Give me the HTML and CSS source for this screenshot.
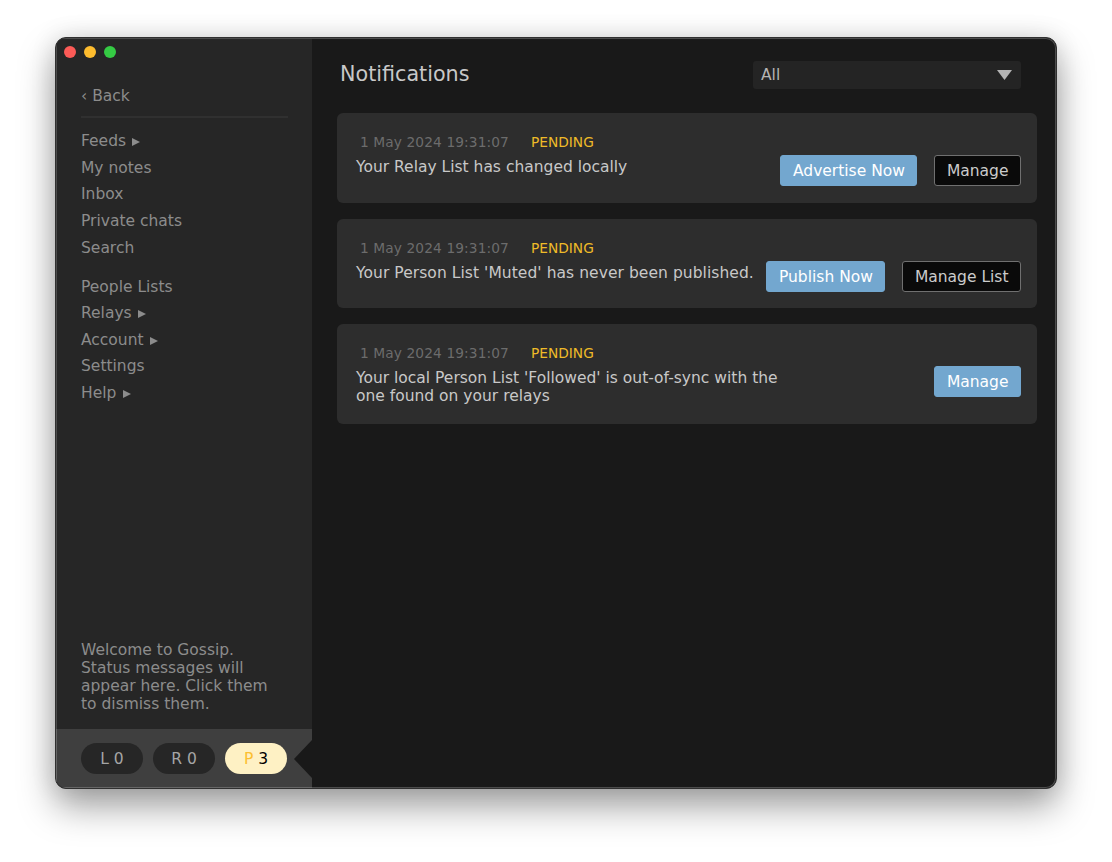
FILE: index.html
```html
<!DOCTYPE html>
<html lang="en">
  <head>
    <meta charset="utf-8">
    <title>Gossip</title>
    <link rel="stylesheet" href="styles.css">
  </head>
  <body>
    <div class="window">
      <div class="sidebar">
        <div class="traffic-lights">
          <span class="light red"></span>
          <span class="light yellow"></span>
          <span class="light green"></span>
        </div>
        <a class="back">‹ Back</a>
        <hr>
        <nav class="menu">
          <a>Feeds <i class="arrow"></i></a>
          <a>My notes</a>
          <a>Inbox</a>
          <a>Private chats</a>
          <a>Search</a>
        </nav>
        <nav class="menu">
          <a>People Lists</a>
          <a>Relays <i class="arrow"></i></a>
          <a>Account <i class="arrow"></i></a>
          <a>Settings</a>
          <a>Help <i class="arrow"></i></a>
        </nav>
        <p class="status">Welcome to Gossip.<br>Status messages will<br>appear here. Click them<br>to dismiss them.</p>
        <div class="footer">
          <span class="pill">L 0</span>
          <span class="pill">R 0</span>
          <span class="pill active"><span class="letter">P</span> 3</span>
          <svg class="pointer" width="18" height="38" viewBox="0 0 18 38">
            <path d="M18 0 L0 19 L18 38 Z" fill="#191919"/>
          </svg>
        </div>
      </div>

      <div class="main">
        <div class="header">
          <h1>Notifications</h1>
          <div class="select">
            <span>All</span>
            <svg width="15" height="10" viewBox="0 0 15 10">
              <path d="M0 0 H15 L7.5 10 Z" fill="#b4b4b4"/>
            </svg>
          </div>
        </div>

        <div class="card">
          <div class="meta"><span class="date">1 May 2024 19:31:07</span><span class="pending">PENDING</span></div>
          <div class="row">
            <p>Your Relay List has changed locally</p>
            <div class="buttons">
              <button class="blue-button">Advertise Now</button>
              <button class="black-button">Manage</button>
            </div>
          </div>
        </div>

        <div class="card">
          <div class="meta"><span class="date">1 May 2024 19:31:07</span><span class="pending">PENDING</span></div>
          <div class="row">
            <p class="long">Your Person List 'Muted' has never been published.</p>
            <div class="buttons">
              <button class="blue-button">Publish Now</button>
              <button class="black-button">Manage List</button>
            </div>
          </div>
        </div>

        <div class="card tall">
          <div class="meta"><span class="date">1 May 2024 19:31:07</span><span class="pending">PENDING</span></div>
          <div class="row">
            <p>Your local Person List 'Followed' is out-of-sync with the<br>one found on your relays</p>
            <div class="buttons">
              <button class="blue-button">Manage</button>
            </div>
          </div>
        </div>
      </div>
    </div>
  </body>
</html>
```
FILE: styles.css
```css
* {
  box-sizing: border-box;
}

body {
  margin: 0;
  padding: 37px 55px;
  height: 862px;
  overflow: hidden;
  background: #fff;
  font-family: "DejaVu Sans", sans-serif;
  font-size: 15.5px;
  line-height: 18px;
}

h1,
p {
  margin: 0;
  font-weight: normal;
}

.window {
  display: flex;
  width: 1002px;
  height: 752px;
  border: 1px solid #303030;
  border-radius: 11px;
  background: #191919;
  overflow: hidden;
  box-shadow: inset 0 0 0 1px #4c4c4c, 0 18px 36px rgba(0, 0, 0, 0.36), 0 0 26px rgba(0, 0, 0, 0.12);
}

.sidebar {
  display: flex;
  flex-direction: column;
  width: 256px;
  background: #262626;
  color: #8c8c8c;
  box-shadow: inset 1px 1px 0 #4c4c4c;
}

.traffic-lights {
  display: flex;
  gap: 8px;
  padding: 8px 8px 0;
}

.light {
  width: 12px;
  height: 12px;
  border-radius: 50%;
}

.red {
  background: #fc5b57;
}

.yellow {
  background: #fdbc2e;
}

.green {
  background: #35cb44;
}

.back {
  margin: 29px 25px 0;
}

hr {
  width: 207px;
  height: 2px;
  margin: 11px 25px 10px;
  border: none;
  background: #303030;
}

.menu {
  display: flex;
  flex-direction: column;
  padding: 0 25px;
  margin-bottom: 12.5px;
}

.menu a {
  height: 26.7px;
  line-height: 26.7px;
}

.menu + .menu a {
  height: 26.5px;
}

.arrow {
  display: inline-block;
  margin-left: 1.5px;
  border-left: 8px solid #8c8c8c;
  border-top: 4px solid transparent;
  border-bottom: 4px solid transparent;
}

.status {
  margin-top: auto;
  padding: 0 25px 16px;
}

.footer {
  position: relative;
  display: flex;
  gap: 10px;
  height: 59px;
  padding: 14px 25px;
  background: #3f3f3f;
  box-shadow: inset 1px -1px 0 #666;
}

.pill {
  width: 62px;
  height: 31px;
  border-radius: 16px;
  background: #262626;
  color: #a5a5a5;
  line-height: 32px;
  text-align: center;
}

.active {
  background: #fef1c4;
  color: #000;
}

.letter {
  color: #fcbf30;
}

/* notch that points at the open page */
.pointer {
  position: absolute;
  right: 0;
  top: 11px;
}

.main {
  flex: 1;
  padding: 23px 19px 0 25px;
}

.header {
  display: flex;
  justify-content: space-between;
  height: 52px;
  padding: 0 16px 0 3px;
}

h1 {
  color: #c8c8c8;
  font-size: 20.7px;
  line-height: 26px;
}

.select {
  display: flex;
  align-items: center;
  justify-content: space-between;
  width: 268px;
  height: 28px;
  padding: 0 9px 0 8px;
  border-radius: 3px;
  background: #242424;
  color: #b4b4b4;
}

.card {
  height: 89.5px;
  margin-bottom: 16px;
  padding: 20px 16px 0 19px;
  border-radius: 6px;
  background: #2d2d2d;
}

.tall {
  height: 100px;
}

.meta {
  display: flex;
  gap: 22px;
  padding-left: 4px;
  font-size: 13.75px;
  height: 22px;
}

.date {
  color: #6c6c6c;
  letter-spacing: 0.1px;
}

.pending {
  color: #efbb28;
}

.row {
  display: flex;
  justify-content: space-between;
}

.row p {
  padding-top: 3px;
  color: #c8c8c8;
  white-space: nowrap;
}

.row .long {
  letter-spacing: 0.06px;
}

.buttons {
  display: flex;
  gap: 17px;
}

button {
  height: 31px;
  padding: 1px 11.5px 0;
  border: 1px solid #73a7cf;
  border-radius: 3px;
  font-family: inherit;
  font-size: 15.5px;
  white-space: nowrap;
}

.blue-button {
  background: #73a7cf;
  color: #fff;
}

.black-button {
  border-color: #707070;
  background: #0a0a0a;
  color: #ccc;
}
```
